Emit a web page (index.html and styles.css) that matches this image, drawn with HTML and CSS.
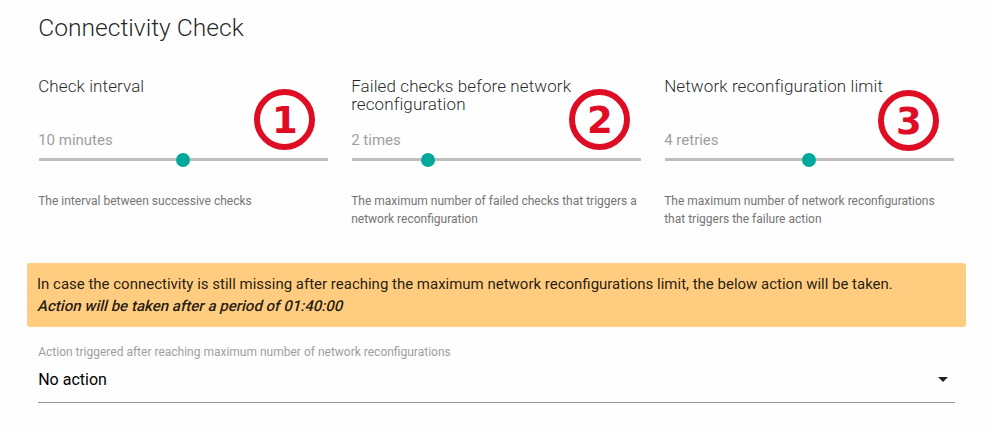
FILE: index.html
```html
<!DOCTYPE html>
<html lang="en">
<head>
<meta charset="utf-8">
<title>Connectivity Check</title>
<link rel="stylesheet" href="styles.css">
</head>
<body>
<main class="panel">
  <h1 class="title">Connectivity Check</h1>
  <div class="columns">
    <section class="setting">
      <h2 class="name">Check interval</h2>
      <div class="value">10 minutes</div>
      <div class="slider"><span class="thumb thumb-interval"></span></div>
      <p class="hint">The interval between successive checks</p>
      <span class="badge badge-one">1</span>
    </section>
    <section class="setting">
      <h2 class="name">Failed checks before network reconfiguration</h2>
      <div class="value">2 times</div>
      <div class="slider"><span class="thumb thumb-failed"></span></div>
      <p class="hint">The maximum number of failed checks that triggers a network reconfiguration</p>
      <span class="badge badge-two">2</span>
    </section>
    <section class="setting">
      <h2 class="name">Network reconfiguration limit</h2>
      <div class="value">4 retries</div>
      <div class="slider"><span class="thumb thumb-limit"></span></div>
      <p class="hint">The maximum number of network reconfigurations that triggers the failure action</p>
      <span class="badge badge-three">3</span>
    </section>
  </div>
  <div class="notice">In case the connectivity is still missing after reaching the maximum network reconfigurations limit, the below action will be taken.<br><strong class="period">Action will be taken after a period of 01:40:00</strong></div>
  <div class="field">
    <div class="label">Action triggered after reaching maximum number of network reconfigurations</div>
    <div class="select"><span>No action</span><svg class="arrow" viewBox="0 0 10 5"><path d="M0 0h10L5 5z"/></svg></div>
  </div>
</main>
</body>
</html>
```
FILE: styles.css
```css
* { box-sizing: border-box; }
body { margin: 0; background: #fefefe; color: rgba(0,0,0,.87); font-family: Roboto, sans-serif; }
.panel { height: 428px; padding: 12px 27px 0; }
.title { margin: 0 0 33px 11.2px; font-size: 24.6px; line-height: 32px; font-weight: 300; }
.columns { display: grid; grid-template-columns: repeat(3, 290px); column-gap: 23px; height: 186px; margin-left: 11.2px; }
.setting { position: relative; }
.name { height: 54px; margin: 0; font-size: 17px; line-height: 18px; font-weight: 300; letter-spacing: .1px; }
.value { font-size: 15px; line-height: 18px; color: #9e9e9e; }
.slider { display: flex; align-items: center; height: 20px; margin: 1px 0 0 -.2px; background: linear-gradient(#bdbdbd, #bdbdbd) 1px 8px / 289px 3px no-repeat; }
.thumb { width: 14px; height: 14px; border-radius: 50%; background: #00a999; }
.thumb-interval { margin-left: 138px; }
.thumb-failed { margin-left: 70px; }
.thumb-limit { margin-left: 138px; }
.hint { margin: 22px 0 0; font-size: 12px; line-height: 18px; color: #757575; }
.badge { position: absolute; display: flex; align-items: center; justify-content: center; width: 61px; height: 61px; padding-top: 2px; border: 6px solid #df0d24; border-radius: 50%; background: #fff; color: #df0d24; font: bold 37px/1 "DejaVu Sans", sans-serif; }
.badge-one { left: 216.2px; top: 12.4px; }
.badge-two { left: 218.2px; top: 12.4px; }
.badge-three { left: 214.2px; top: 13.4px; }
.notice { height: 64px; padding: 10px; border-radius: 3px; background: #ffcc80; font-size: 14.99px; line-height: 22px; white-space: nowrap; }
.period { display: inline-block; font-weight: 500; letter-spacing: .02px; transform: skewX(-14deg); transform-origin: 0 16px; }
.field { margin: 16px 11px 0; }
.label { padding-left: .2px; font-size: 12px; line-height: 18px; color: #9e9e9e; }
.select { display: flex; align-items: center; justify-content: space-between; height: 42px; padding: 0 7px 4px .2px; border-bottom: 1px solid #949494; font-size: 16px; color: #000; }
.arrow { width: 10px; height: 5px; fill: #212121; }
```
